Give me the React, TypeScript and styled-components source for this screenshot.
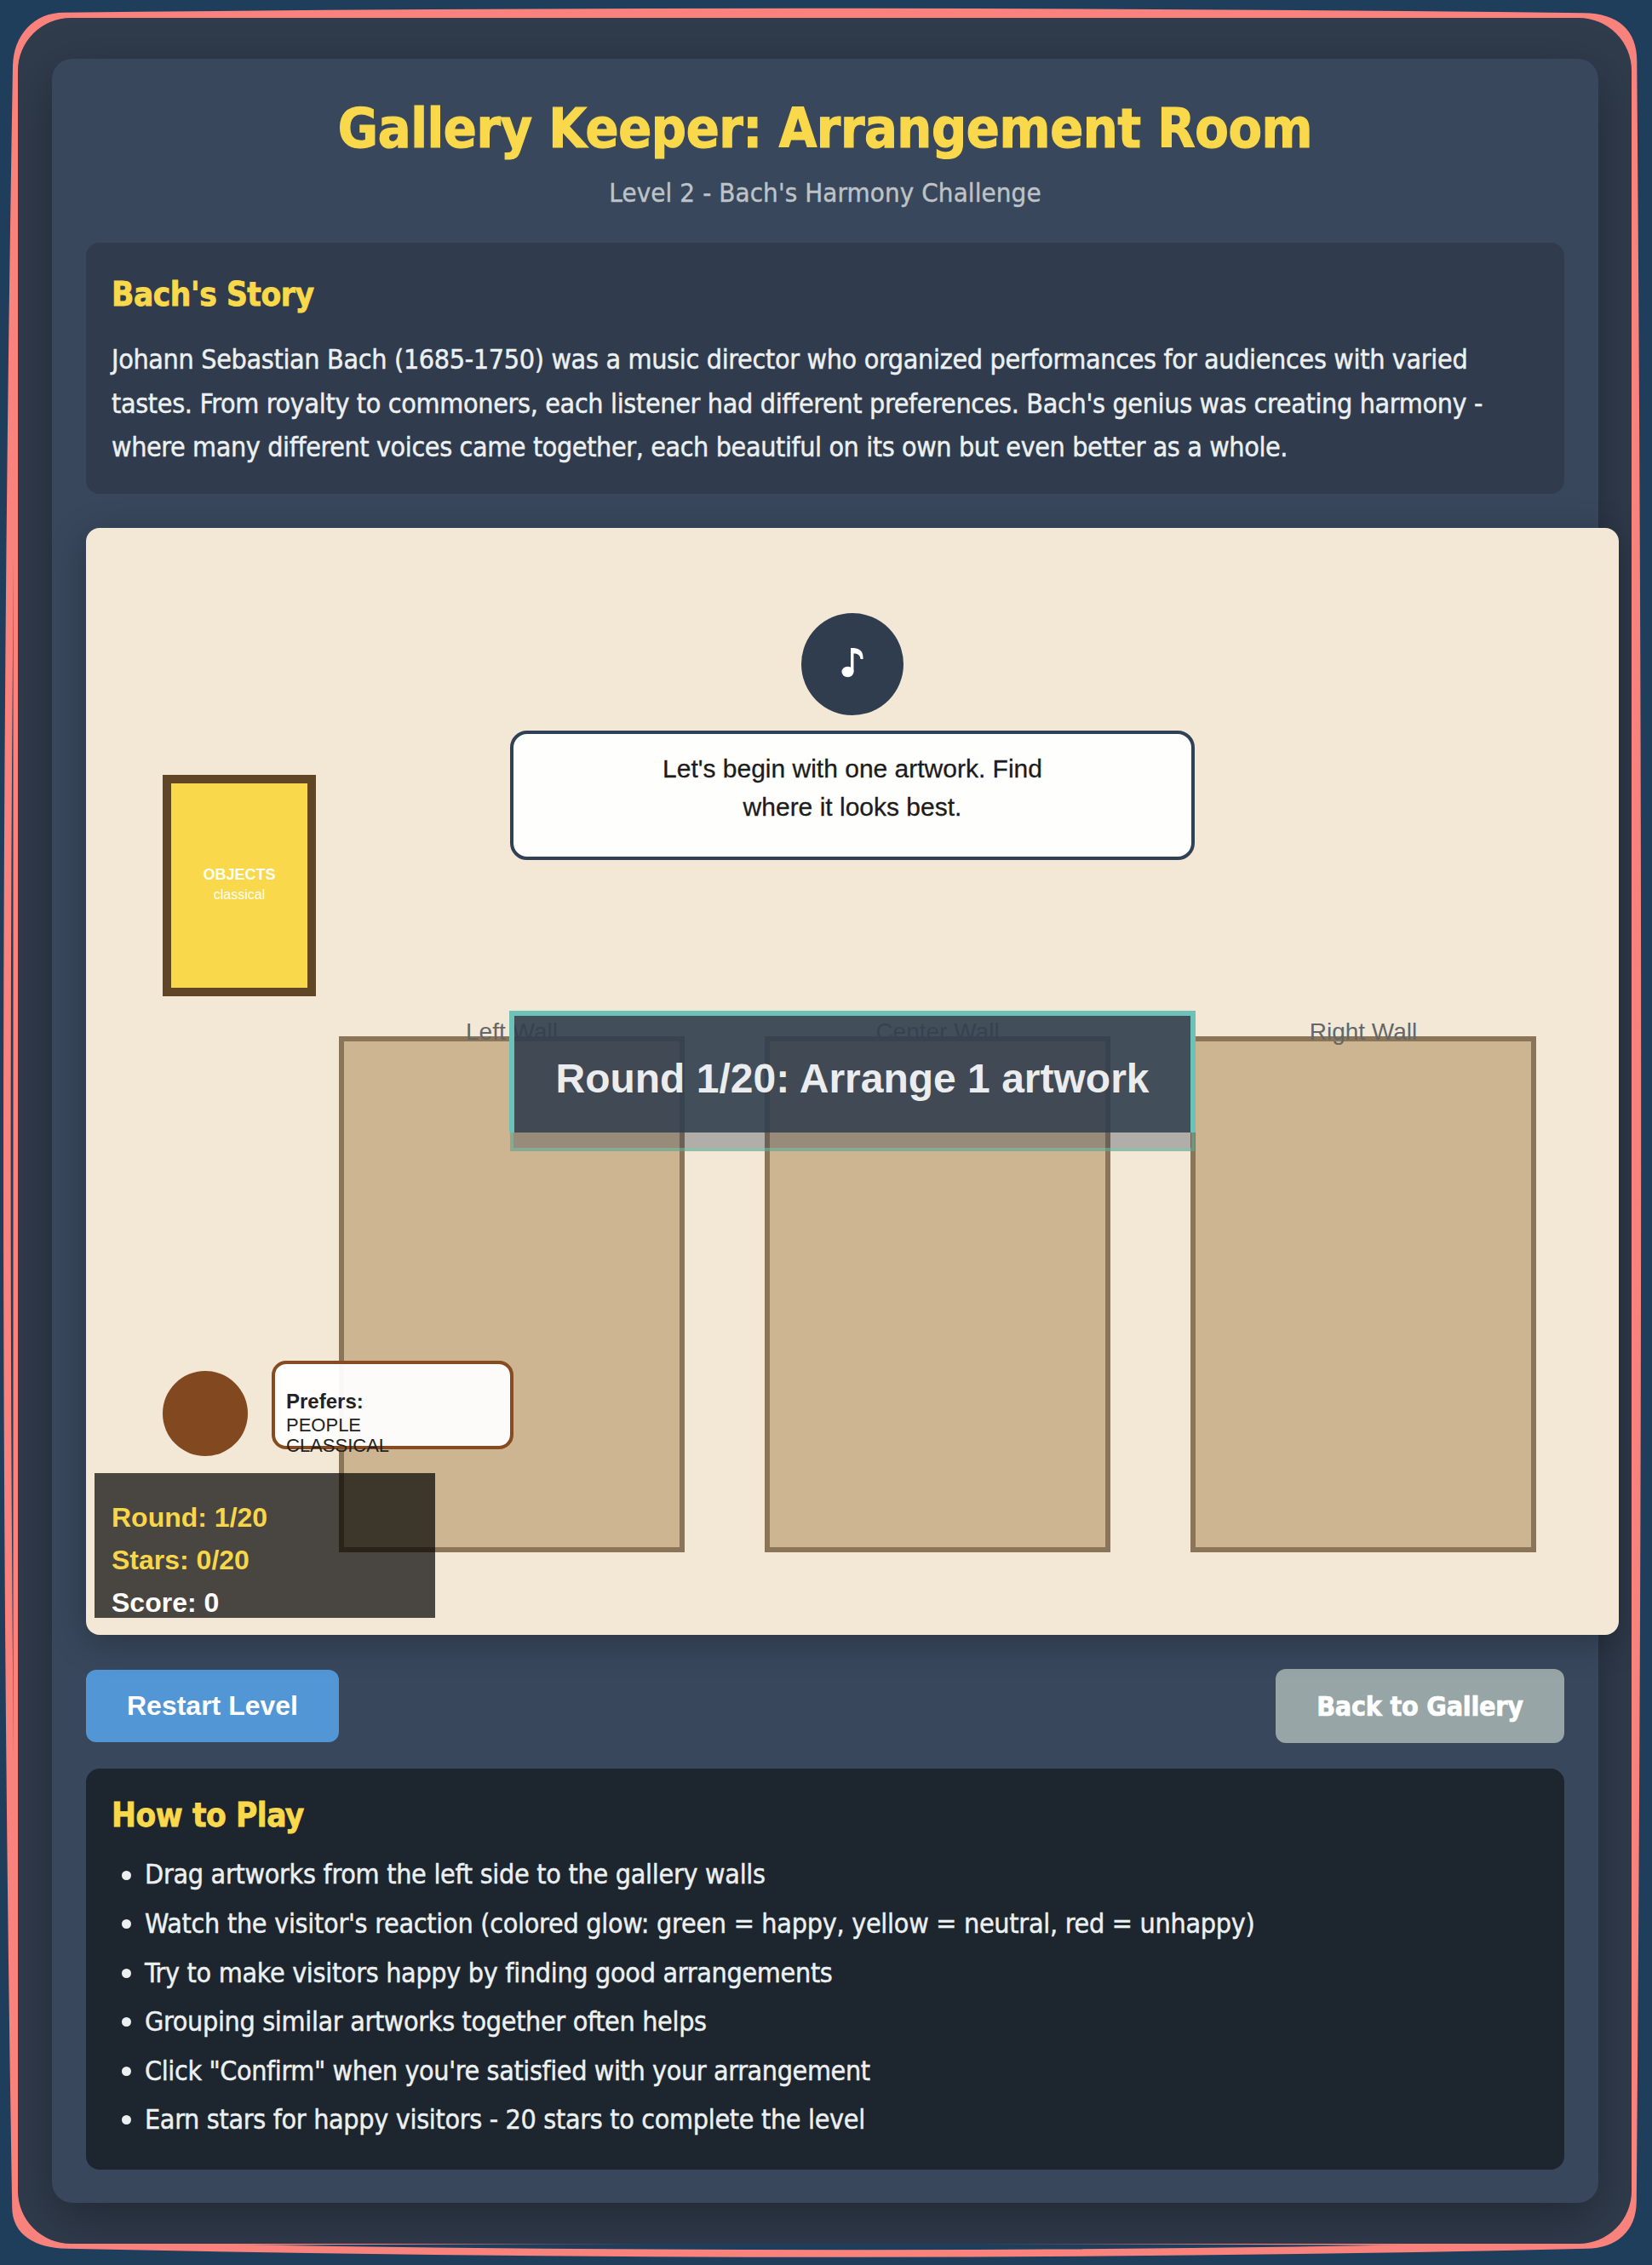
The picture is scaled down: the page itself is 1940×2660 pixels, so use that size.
import React from "react";
import styled, { createGlobalStyle } from "styled-components";

const ui = `"DejaVu Sans Condensed", "DejaVu Sans", sans-serif`;
const arial = `"Liberation Sans", Arial, sans-serif`;
const gold = "#f9d94b";

const GlobalStyle = createGlobalStyle`
  html, body { margin: 0; background: #1e3e5c; }
  body { font-family: ${ui}; font-stretch: condensed; color: #ecf0f1; }
  * { box-sizing: border-box; }
`;

const Page = styled.div`
  position: relative;
  width: 1940px;
  height: 2660px;
  padding: 21px 24px 25px 21px;
  overflow: hidden;
`;

const SketchBorder = styled.svg`
  position: absolute;
  left: 0;
  top: 0;
  width: 1940px;
  height: 2660px;
`;

const Frame = styled.main`
  position: relative;
  height: 2614px;
  padding: 48px 39px 0 40px;
  border-radius: 62px;
  background: #303b4c;
  overflow: hidden;
`;

const Card = styled.section`
  height: 2518px;
  padding: 40px;
  border-radius: 24px;
  background: #38475c;
  box-shadow: 0 20px 60px rgba(0, 0, 0, 0.3);
`;

const Header = styled.header`
  display: flex;
  flex-direction: column;
  align-items: center;
  gap: 8px;
  height: 176px;
`;

const Title = styled.h1`
  margin: 0;
  font-size: 64px;
  line-height: 84px;
  letter-spacing: -0.38px;
  color: ${gold};
  white-space: nowrap;
  -webkit-text-stroke: 1.2px ${gold};
`;

const Subtitle = styled.p`
  margin: 0;
  font-size: 31px;
  line-height: 51px;
  letter-spacing: 0.1px;
  color: #bdc3c7;
  white-space: nowrap;
  -webkit-text-stroke: 0.4px #bdc3c7;
`;

const Panel = styled.section<{ $dark?: boolean }>`
  padding: ${(p) => (p.$dark ? "24px 30px 25px" : "30px")};
  height: ${(p) => (p.$dark ? "471px" : "295px")};
  border-radius: 16px;
  background: ${(p) => (p.$dark ? "#1d252e" : "#303c4d")};
`;

const PanelTitle = styled.h2<{ $gap: number }>`
  margin: 0 0 ${(p) => p.$gap}px;
  font-size: 38.4px;
  line-height: 61.4px;
  letter-spacing: -0.42px;
  color: ${gold};
  -webkit-text-stroke: 0.8px ${gold};
`;

const TextLine = styled.div<{ $spacing: number }>`
  font-size: 32px;
  line-height: 51.2px;
  letter-spacing: ${(p) => p.$spacing}px;
  white-space: nowrap;
  -webkit-text-stroke: 0.45px #ecf0f1;
`;

const Stage = styled.div`
  position: relative;
  width: 1800px;
  height: 1300px;
  margin: 40px 0;
  border-radius: 16px;
  background: #f3e8d6;
  box-shadow: 0 8px 40px rgba(0, 0, 0, 0.25);
  font-family: ${arial};
`;

const Guide = styled.div`
  position: absolute;
  left: 840px;
  top: 100px;
  width: 120px;
  height: 120px;
  border-radius: 50%;
  background: #303d4f;
`;

const Speech = styled.div`
  position: absolute;
  left: 498px;
  top: 238px;
  width: 804px;
  height: 152px;
  padding-top: 19px;
  border: 4px solid #304155;
  border-radius: 20px;
  background: #fefefd;
  color: #1c1c1c;
  font-size: 30px;
  line-height: 44.5px;
  text-align: center;
  -webkit-text-stroke: 0.3px #1c1c1c;
`;

const Artwork = styled.div`
  position: absolute;
  left: 90px;
  top: 290px;
  width: 180px;
  height: 260px;
  padding-top: 96px;
  border: 10px solid #604526;
  background: ${gold};
  color: #fffef5;
  text-align: center;
`;

const ArtworkKind = styled.div`
  font-size: 18px;
  line-height: 22px;
  font-weight: 700;
`;

const ArtworkStyle = styled.div`
  font-size: 16px;
  line-height: 26px;
`;

const Wall = styled.div<{ $x: number }>`
  position: absolute;
  left: ${(p) => p.$x}px;
  top: 597px;
  width: 406px;
  height: 606px;
  border: 6px solid #8a7558;
  background: #cdb591;
`;

const WallLabel = styled.div`
  margin-top: -27px;
  color: #64676a;
  font-size: 28px;
  line-height: 32px;
  text-align: center;
`;

const Visitor = styled.div`
  position: absolute;
  left: 90px;
  top: 990px;
  width: 100px;
  height: 100px;
  border-radius: 50%;
  background: #82481f;
`;

const Preference = styled.div`
  position: absolute;
  left: 218px;
  top: 978px;
  width: 284px;
  height: 104px;
  padding: 30px 0 0 13px;
  border: 4px solid #864b20;
  border-radius: 17px;
  background: rgba(255, 255, 255, 0.95);
  background-clip: padding-box;
  color: #222;
  font-size: 22px;
  line-height: 24px;
`;

const PreferenceTitle = styled.div`
  margin-bottom: 2px;
  font-size: 24px;
  line-height: 28px;
  font-weight: 700;
`;

const Score = styled.div`
  position: absolute;
  left: 10px;
  top: 1110px;
  width: 400px;
  height: 170px;
  padding: 27px 20px 0;
  background: rgba(0, 0, 0, 0.7);
`;

const ScoreLine = styled.div<{ $plain?: boolean }>`
  font-size: 32px;
  line-height: 50px;
  font-weight: 700;
  color: ${(p) => (p.$plain ? "#fff" : "#f7d649")};
`;

const Banner = styled.div`
  position: absolute;
  left: 497px;
  top: 567px;
  width: 806px;
`;

const BannerBody = styled.div`
  height: 143px;
  border: 6px solid #6dc2b8;
  border-bottom: 0;
  padding-top: 46px;
  background: rgba(50, 63, 78, 0.91);
  background-clip: padding-box;
  color: #ebecee;
  font-size: 48px;
  line-height: 56px;
  font-weight: 700;
  text-align: center;
  white-space: nowrap;
`;

const BannerFoot = styled.div`
  height: 22px;
  margin: 0 1px;
  border: 4px solid rgba(96, 166, 148, 0.65);
  border-top: 0;
  background: rgba(50, 59, 79, 0.34);
  background-clip: padding-box;
`;

const Actions = styled.div`
  display: flex;
  justify-content: space-between;
  align-items: center;
  height: 87px;
  margin-bottom: 30px;
`;

const Button = styled.button<{ $secondary?: boolean }>`
  display: flex;
  align-items: center;
  justify-content: center;
  width: ${(p) => (p.$secondary ? 339 : 297)}px;
  height: ${(p) => (p.$secondary ? 87 : 85)}px;
  padding: 0;
  border: 0;
  border-radius: 12px;
  background: ${(p) => (p.$secondary ? "#98a5a6" : "#5296d6")};
  color: #fff;
  font-family: ${(p) => (p.$secondary ? ui : arial)};
  font-stretch: inherit;
  font-size: 32px;
  font-weight: 700;
  letter-spacing: ${(p) => (p.$secondary ? -0.25 : 0)}px;
  white-space: nowrap;
  -webkit-text-stroke: ${(p) => (p.$secondary ? 0.7 : 0)}px #fff;
`;

const List = styled.ul`
  margin: 0;
  padding: 0 0 0 12px;
  list-style: none;
`;

const Item = styled.li`
  display: flex;
  align-items: center;
  gap: 16px;
  margin-bottom: 6.4px;

  &::before {
    content: "";
    width: 11px;
    height: 11px;
    border-radius: 50%;
    background: #ecf0f1;
  }
`;

const story = [
  { text: "Johann Sebastian Bach (1685-1750) was a music director who organized performances for audiences with varied", spacing: -0.34 },
  { text: "tastes. From royalty to commoners, each listener had different preferences. Bach's genius was creating harmony -", spacing: -0.35 },
  { text: "where many different voices came together, each beautiful on its own but even better as a whole.", spacing: -0.4 },
];

const walls = [
  { name: "Left Wall", x: 297 },
  { name: "Center Wall", x: 797 },
  { name: "Right Wall", x: 1297 },
];

const rules = [
  { text: "Drag artworks from the left side to the gallery walls", spacing: -0.29 },
  { text: "Watch the visitor's reaction (colored glow: green = happy, yellow = neutral, red = unhappy)", spacing: -0.28 },
  { text: "Try to make visitors happy by finding good arrangements", spacing: -0.32 },
  { text: "Grouping similar artworks together often helps", spacing: -0.34 },
  { text: "Click \"Confirm\" when you're satisfied with your arrangement", spacing: -0.39 },
  { text: "Earn stars for happy visitors - 20 stars to complete the level", spacing: -0.33 },
];

export default function App() {
  return (
    <Page>
      <GlobalStyle />
      <SketchBorder viewBox="0 0 1940 2660" fill="none" stroke="#fa827c" strokeWidth="8.6">
        <path d="M75 19 Q970 9 1860 19.5 C1898 20 1918 38 1918 72 Q1928 1330 1917.5 2586 C1917 2618 1896 2636 1863 2636.5 Q1000 2656.5 78 2636.5 C44 2636 18.5 2622 18.5 2592 Q-2.2 1340 19.3 78 C20 44 42 19 75 19 Z" />
        <path d="M80 22 H1858 C1886 22 1915 46 1915.5 80 Q1910.4 1330 1915.5 2575 C1914 2608 1890 2634 1858 2634 Q970 2627 80 2634 C46 2632 20 2612 19.8 2578 V82 C20 50 44 22 80 22 Z" />
      </SketchBorder>
      <Frame>
        <Card>
          <Header>
            <Title>Gallery Keeper: Arrangement Room</Title>
            <Subtitle>Level 2 - Bach's Harmony Challenge</Subtitle>
          </Header>
          <Panel>
            <PanelTitle $gap={21}>Bach's Story</PanelTitle>
            {story.map((line) => (
              <TextLine key={line.text} $spacing={line.spacing}>
                {line.text}
              </TextLine>
            ))}
          </Panel>
          <Stage>
            {walls.map((wall) => (
              <Wall key={wall.name} $x={wall.x}>
                <WallLabel>{wall.name}</WallLabel>
              </Wall>
            ))}
            <Guide>
              <svg width="120" height="120" viewBox="0 0 120 120" fill="#fff">
                <ellipse cx="54.5" cy="69" rx="7" ry="6.2" />
                <path d="M58 41 H62 C69 42 73 45 72.5 54 L69.5 54 C69 49 66 47.5 61.5 47.5 V69 H58 Z" />
              </svg>
            </Guide>
            <Speech>
              Let's begin with one artwork. Find
              <br />
              where it looks best.
            </Speech>
            <Artwork>
              <ArtworkKind>OBJECTS</ArtworkKind>
              <ArtworkStyle>classical</ArtworkStyle>
            </Artwork>
            <Visitor />
            <Preference>
              <PreferenceTitle>Prefers:</PreferenceTitle>
              <div>PEOPLE</div>
              <div>CLASSICAL</div>
            </Preference>
            <Score>
              <ScoreLine>Round: 1/20</ScoreLine>
              <ScoreLine>Stars: 0/20</ScoreLine>
              <ScoreLine $plain>Score: 0</ScoreLine>
            </Score>
            <Banner>
              <BannerBody>Round 1/20: Arrange 1 artwork</BannerBody>
              <BannerFoot />
            </Banner>
          </Stage>
          <Actions>
            <Button>Restart Level</Button>
            <Button $secondary>Back to Gallery</Button>
          </Actions>
          <Panel $dark>
            <PanelTitle $gap={14}>How to Play</PanelTitle>
            <List>
              {rules.map((rule) => (
                <Item key={rule.text}>
                  <TextLine $spacing={rule.spacing}>{rule.text}</TextLine>
                </Item>
              ))}
            </List>
          </Panel>
        </Card>
      </Frame>
    </Page>
  );
}
